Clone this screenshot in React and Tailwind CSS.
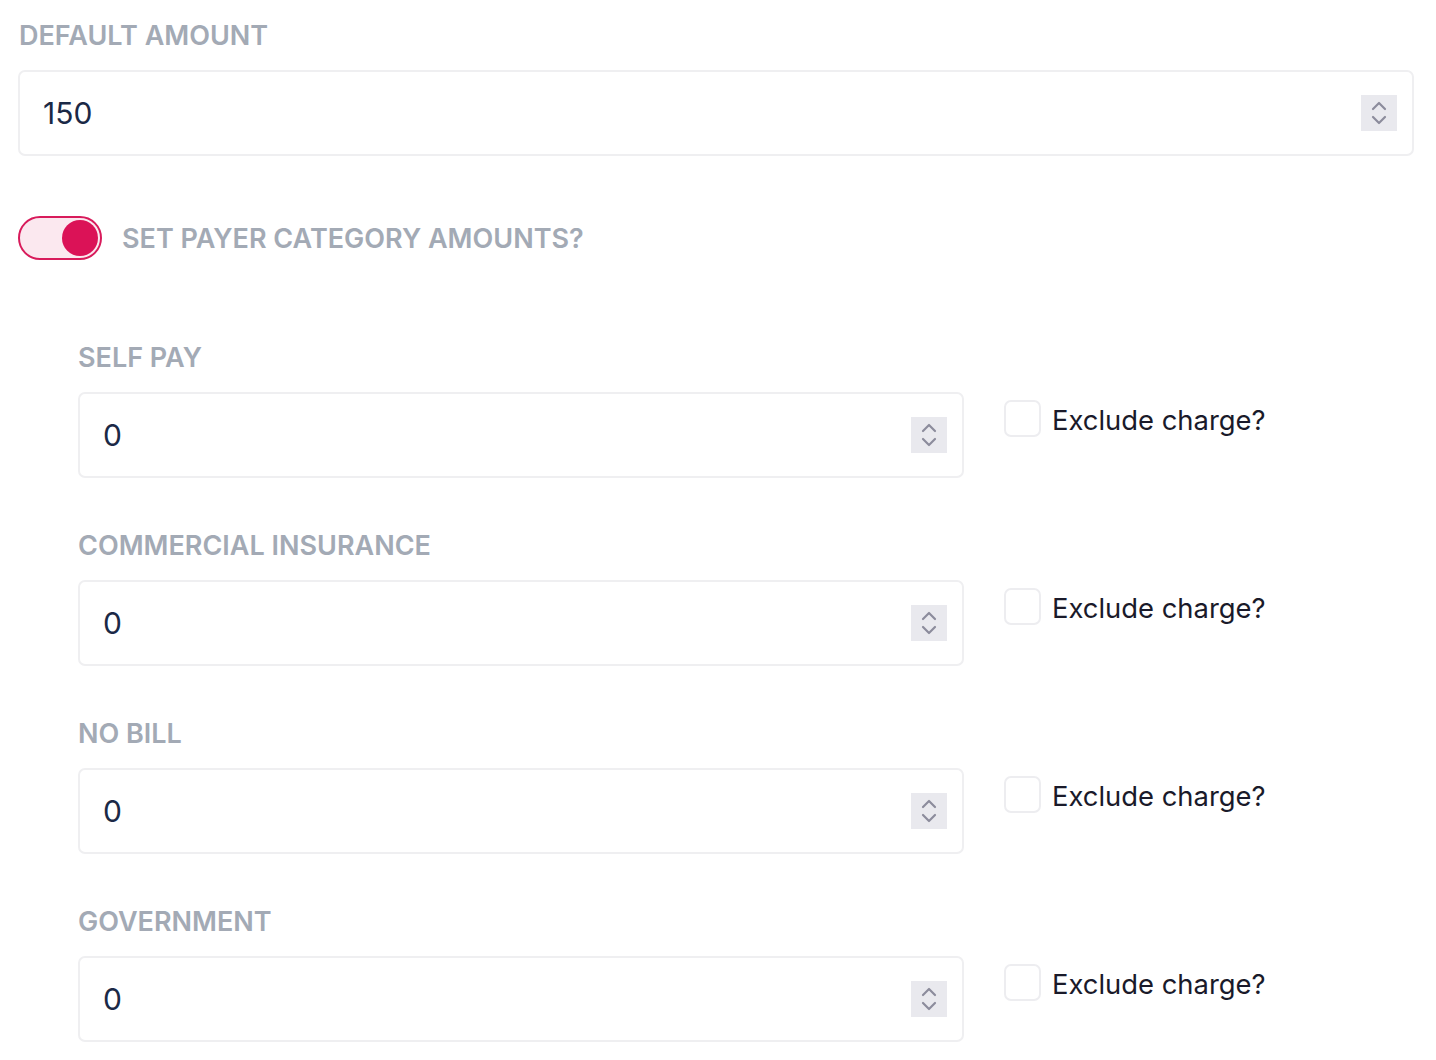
import React from "react";

const font = { fontFamily: '"Inter", "Liberation Sans", sans-serif' };

function Spinner() {
  return (
    <div className="w-[36px] h-[36px] bg-[#e9e9ee] flex items-center justify-center shrink-0">
      <svg width="18" height="28" viewBox="0 0 18 28" fill="none" stroke="#8c8c9c" strokeWidth="2.2" strokeLinecap="round" strokeLinejoin="round">
        <path d="M3 10 L9 4 L15 10" />
        <path d="M3 18 L9 24 L15 18" />
      </svg>
    </div>
  );
}

function NumberInput({ value, className }) {
  return (
    <div className={"h-[86px] border-2 border-[#efeff1] rounded-[7px] bg-white flex items-center justify-between pl-[23px] pr-[15px] " + className}>
      <span className="text-[30px] text-[#1b2946]">{value}</span>
      <Spinner />
    </div>
  );
}

function Label({ children }) {
  return (
    <div className="h-[30px] leading-[32px] text-[27px] font-semibold text-[#a3aab5] uppercase">{children}</div>
  );
}

function Category({ name, first }) {
  return (
    <div className={first ? "" : "mt-[52px]"}>
      <Label>{name}</Label>
      <div className="mt-[20px] flex items-start">
        <NumberInput value="0" className="w-[886px]" />
        <div className="ml-[40px] mt-[8px] flex items-center">
          <div className="w-[37px] h-[37px] border-2 border-[#ededf0] rounded-[7px] bg-white" />
          <span className="ml-[11px] text-[27.4px] text-[#1a1a2a] leading-[30px] mt-[2px]">Exclude charge?</span>
        </div>
      </div>
    </div>
  );
}

export default function App() {
  return (
    <div className="bg-white min-h-[1060px] pl-[18px] pt-[20px]" style={font}>
      <div className="w-[1396px]">
        <div className="pl-[1px]">
          <Label>Default Amount</Label>
        </div>
        <NumberInput value="150" className="mt-[20px] w-full" />
        <div className="mt-[60px] flex items-center">
          <div className="w-[84px] h-[44px] rounded-full border-2 border-[#d81b5b] bg-[#fbe8ef] flex items-center justify-end pr-[2px]">
            <div className="w-[36px] h-[36px] rounded-full bg-[#db1257]" />
          </div>
          <div className="ml-[20px]">
            <Label>Set payer category amounts?</Label>
          </div>
        </div>
        <div className="pl-[60px] mt-[82px]">
          <Category name="Self Pay" first />
          <Category name="Commercial Insurance" />
          <Category name="No Bill" />
          <Category name="Government" />
        </div>
      </div>
    </div>
  );
}
